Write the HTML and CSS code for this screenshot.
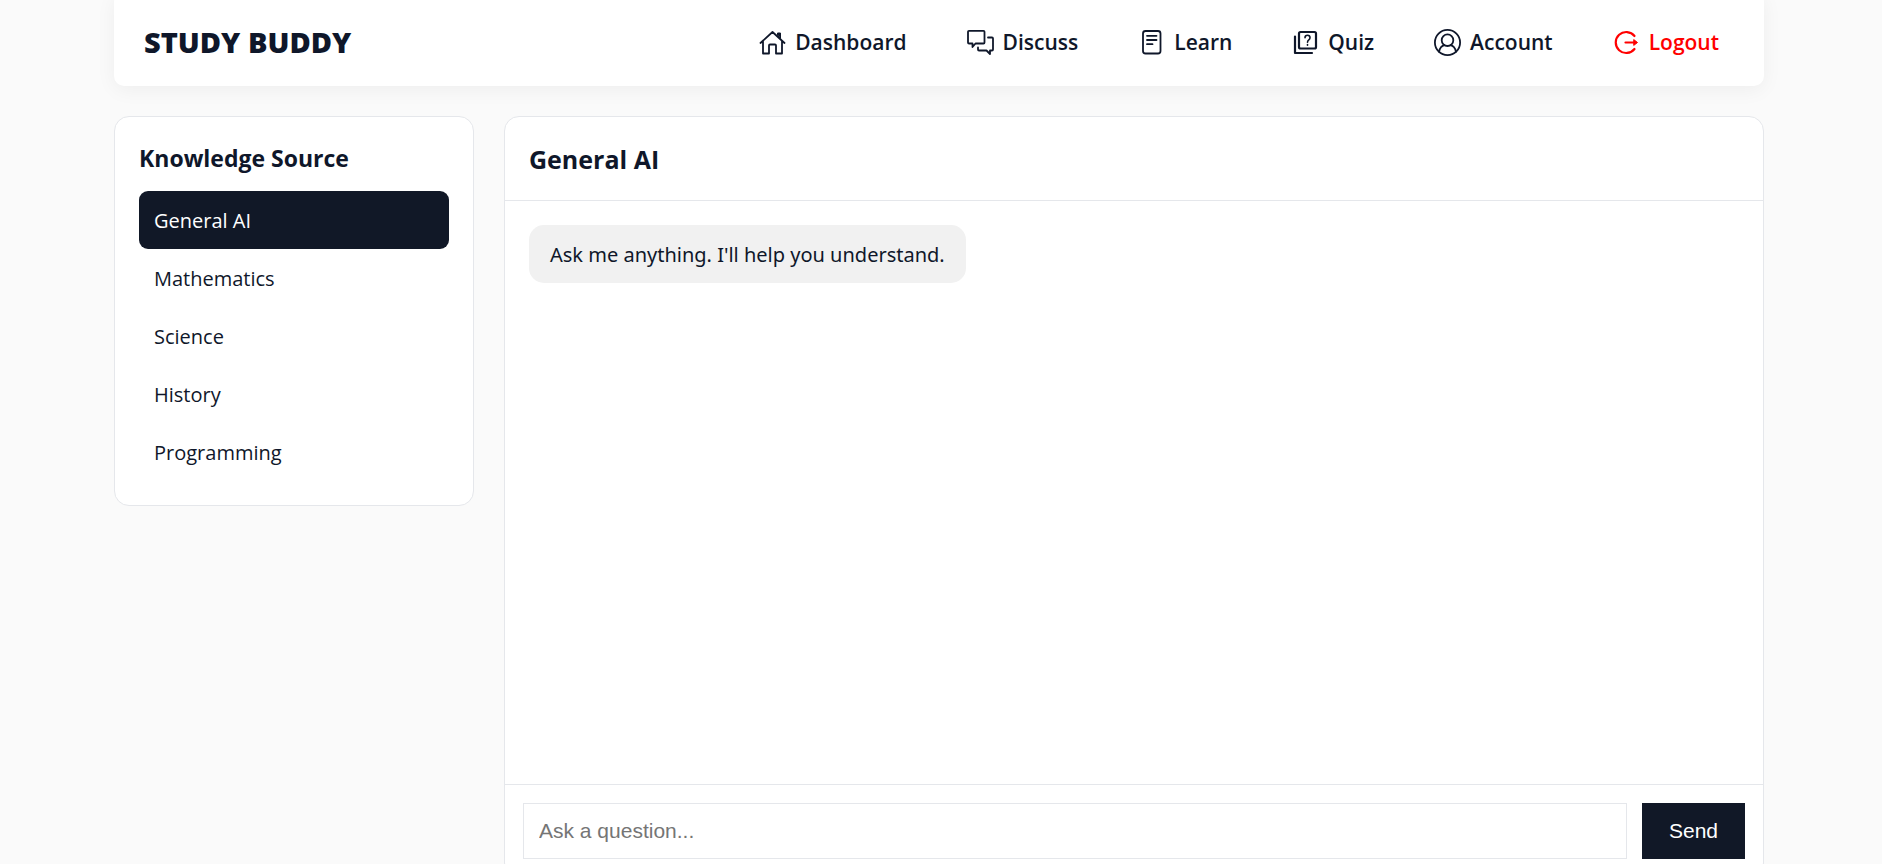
FILE: index.html
```html
<!DOCTYPE html>
<html lang="en">
<head>
    <meta charset="UTF-8">
    <meta name="viewport" content="width=device-width, initial-scale=1.0">
    <title>Study Buddy</title>
    <link rel="stylesheet" href="styles.css">
</head>
<body>
    <header class="navbar">
        <div class="logo">STUDY BUDDY</div>
        <nav class="nav-links">
            <a href="#">
                <svg class="icon" viewBox="0 0 27 27"><path d="M1.5 14 13.5 3 25.5 14M4 12V24.5H10V16.5Q10 15.5 11 15.5H16Q17 15.5 17 16.5V24.5H23V12"/><path class="solid" d="M18.5 6V4H21.5V9Z"/></svg>
                Dashboard
            </a>
            <a href="#">
                <svg class="icon" viewBox="0 0 27 27"><path d="M2 1.8H16.5Q17.5 1.8 17.5 2.8V13.5Q17.5 14.5 16.5 14.5H8.5L5.5 18V14.5H2Q1 14.5 1 13.5V2.8Q1 1.8 2 1.8ZM21 8.5H25Q26 8.5 26 9.5V20.5Q26 21.5 25 21.5H23V25L19.5 21.5H12Q11 21.5 11 20.5V18.5"/></svg>
                Discuss
            </a>
            <a href="#">
                <svg class="icon" viewBox="0 0 27 27"><rect x="5" y="2" width="17.5" height="22.5" rx="2.5"/><path d="M9 6.8H18.5M9 11H18.5M9 15.2H14.5"/></svg>
                Learn
            </a>
            <a href="#">
                <svg class="icon icon-bold" viewBox="0 0 27 27"><rect x="7" y="3" width="17" height="16.5" rx="1.5"/><path d="M3 7.5V24H20"/><path class="thin" d="M13 8.8Q13 6.3 15.5 6.3T18 8.8Q18 10 16.8 10.9T15.5 13.2M15.5 15.6V16.2"/></svg>
                Quiz
            </a>
            <a href="#">
                <svg class="icon" viewBox="0 0 27 27"><circle cx="13.5" cy="13.5" r="12.6"/><circle cx="13.5" cy="11.2" r="5.8"/><path d="M5 22.8C6 18.5 9 16.5 10.5 16.2M22 22.8C21 18.5 18 16.5 16.5 16.2"/></svg>
                Account
            </a>
            <a href="#" class="logout">
                <svg class="icon icon-bold" viewBox="0 0 27 27"><path d="M21.5 7A10.5 10.5 0 1 0 21.5 20M12.5 13.5H22"/><path class="solid" d="M21 10.8 24.5 13.5 21 16.2Z"/></svg>
                Logout
            </a>
        </nav>
    </header>

    <div class="container">
        <aside class="sidebar">
            <h3>Knowledge Source</h3>
            <button class="source active">General AI</button>
            <button class="source">Mathematics</button>
            <button class="source">Science</button>
            <button class="source">History</button>
            <button class="source">Programming</button>
        </aside>

        <main class="chat">
            <h2 class="chat-header">General AI</h2>
            <div class="messages">
                <div class="message">Ask me anything. I'll help you understand.</div>
            </div>
            <form class="chat-form">
                <input type="text" id="question" aria-label="Ask a question" placeholder="Ask a question...">
                <button type="submit">Send</button>
            </form>
        </main>
    </div>
</body>
</html>
```
FILE: styles.css
```css
* {
    box-sizing: border-box;
    margin: 0;
    padding: 0;
}
body {
    background: #fafafa;
    color: #0f172a;
    font-family: "Segoe UI", "Open Sans", sans-serif;
    font-size: 21px;
    line-height: 30px;
    padding: 0 34px 0 30px;
}
.navbar {
    display: flex;
    justify-content: space-between;
    align-items: center;
    max-width: 1650px;
    height: 94px;
    margin: -8px auto 30px;
    padding: 6px 30px 0;
    background: #fff;
    border-radius: 10px;
    box-shadow: 0 4px 20px rgba(0, 0, 0, 0.05);
}
.logo {
    font-size: 29px;
    font-weight: 800;
}
.nav-links {
    display: flex;
    gap: 30px;
}
.nav-links a {
    display: flex;
    align-items: center;
    gap: 9px;
    padding: 0 15px;
    color: #0f172a;
    font-weight: 600;
    text-decoration: none;
}
.nav-links .logout {
    color: #ff0000;
}
.icon {
    width: 27px;
    height: 27px;
    fill: none;
    stroke: currentColor;
    stroke-width: 1.8;
    stroke-linejoin: round;
    stroke-linecap: round;
}
.icon-bold {
    stroke-width: 2.2;
}
.icon .thin {
    stroke-width: 1.6;
}
.icon .solid {
    fill: currentColor;
    stroke-width: 1;
}
.container {
    display: flex;
    align-items: flex-start;
    gap: 30px;
    max-width: 1650px;
    margin: 0 auto;
}
.sidebar {
    display: flex;
    flex-direction: column;
    width: 360px;
    padding: 24px;
    background: #fff;
    border: 1px solid #e5e7eb;
    border-radius: 15px;
}
.sidebar h3 {
    font-size: 23px;
    padding: 2px 0 18px;
}
.source {
    padding: 15px 15px 13px;
    background: none;
    border: none;
    border-radius: 9px;
    color: #0f172a;
    font: inherit;
    font-size: 20px;
    text-align: left;
    cursor: pointer;
}
.source.active {
    background: #111827;
    color: #fff;
}
.chat {
    display: flex;
    flex-direction: column;
    flex: 1;
    height: calc(100vh - 102px);
    background: #fff;
    border: 1px solid #e5e7eb;
    border-radius: 15px;
}
.chat-header {
    padding: 27px 24px 26px;
    border-bottom: 1px solid #e5e7eb;
    font-size: 25px;
}
.messages {
    flex: 1;
    padding: 24px;
    overflow-y: auto;
}
.message {
    width: fit-content;
    padding: 15px 21px 13px;
    background: #f1f1f1;
    border-radius: 15px;
    font-family: "Segoe UI", "Noto Sans", sans-serif;
    font-size: 20px;
}
.chat-form {
    display: flex;
    gap: 15px;
    padding: 18px;
    border-top: 1px solid #e5e7eb;
}
.chat-form input,
.chat-form button {
    height: 56px;
    font-family: Arial, "Liberation Sans", sans-serif;
    font-size: 21px;
}
.chat-form input {
    flex: 1;
    padding: 0 15px;
    border: 1px solid #e5e7eb;
}
.chat-form button {
    padding: 0 27px;
    background: #111827;
    border: none;
    color: #fff;
    cursor: pointer;
}
```
